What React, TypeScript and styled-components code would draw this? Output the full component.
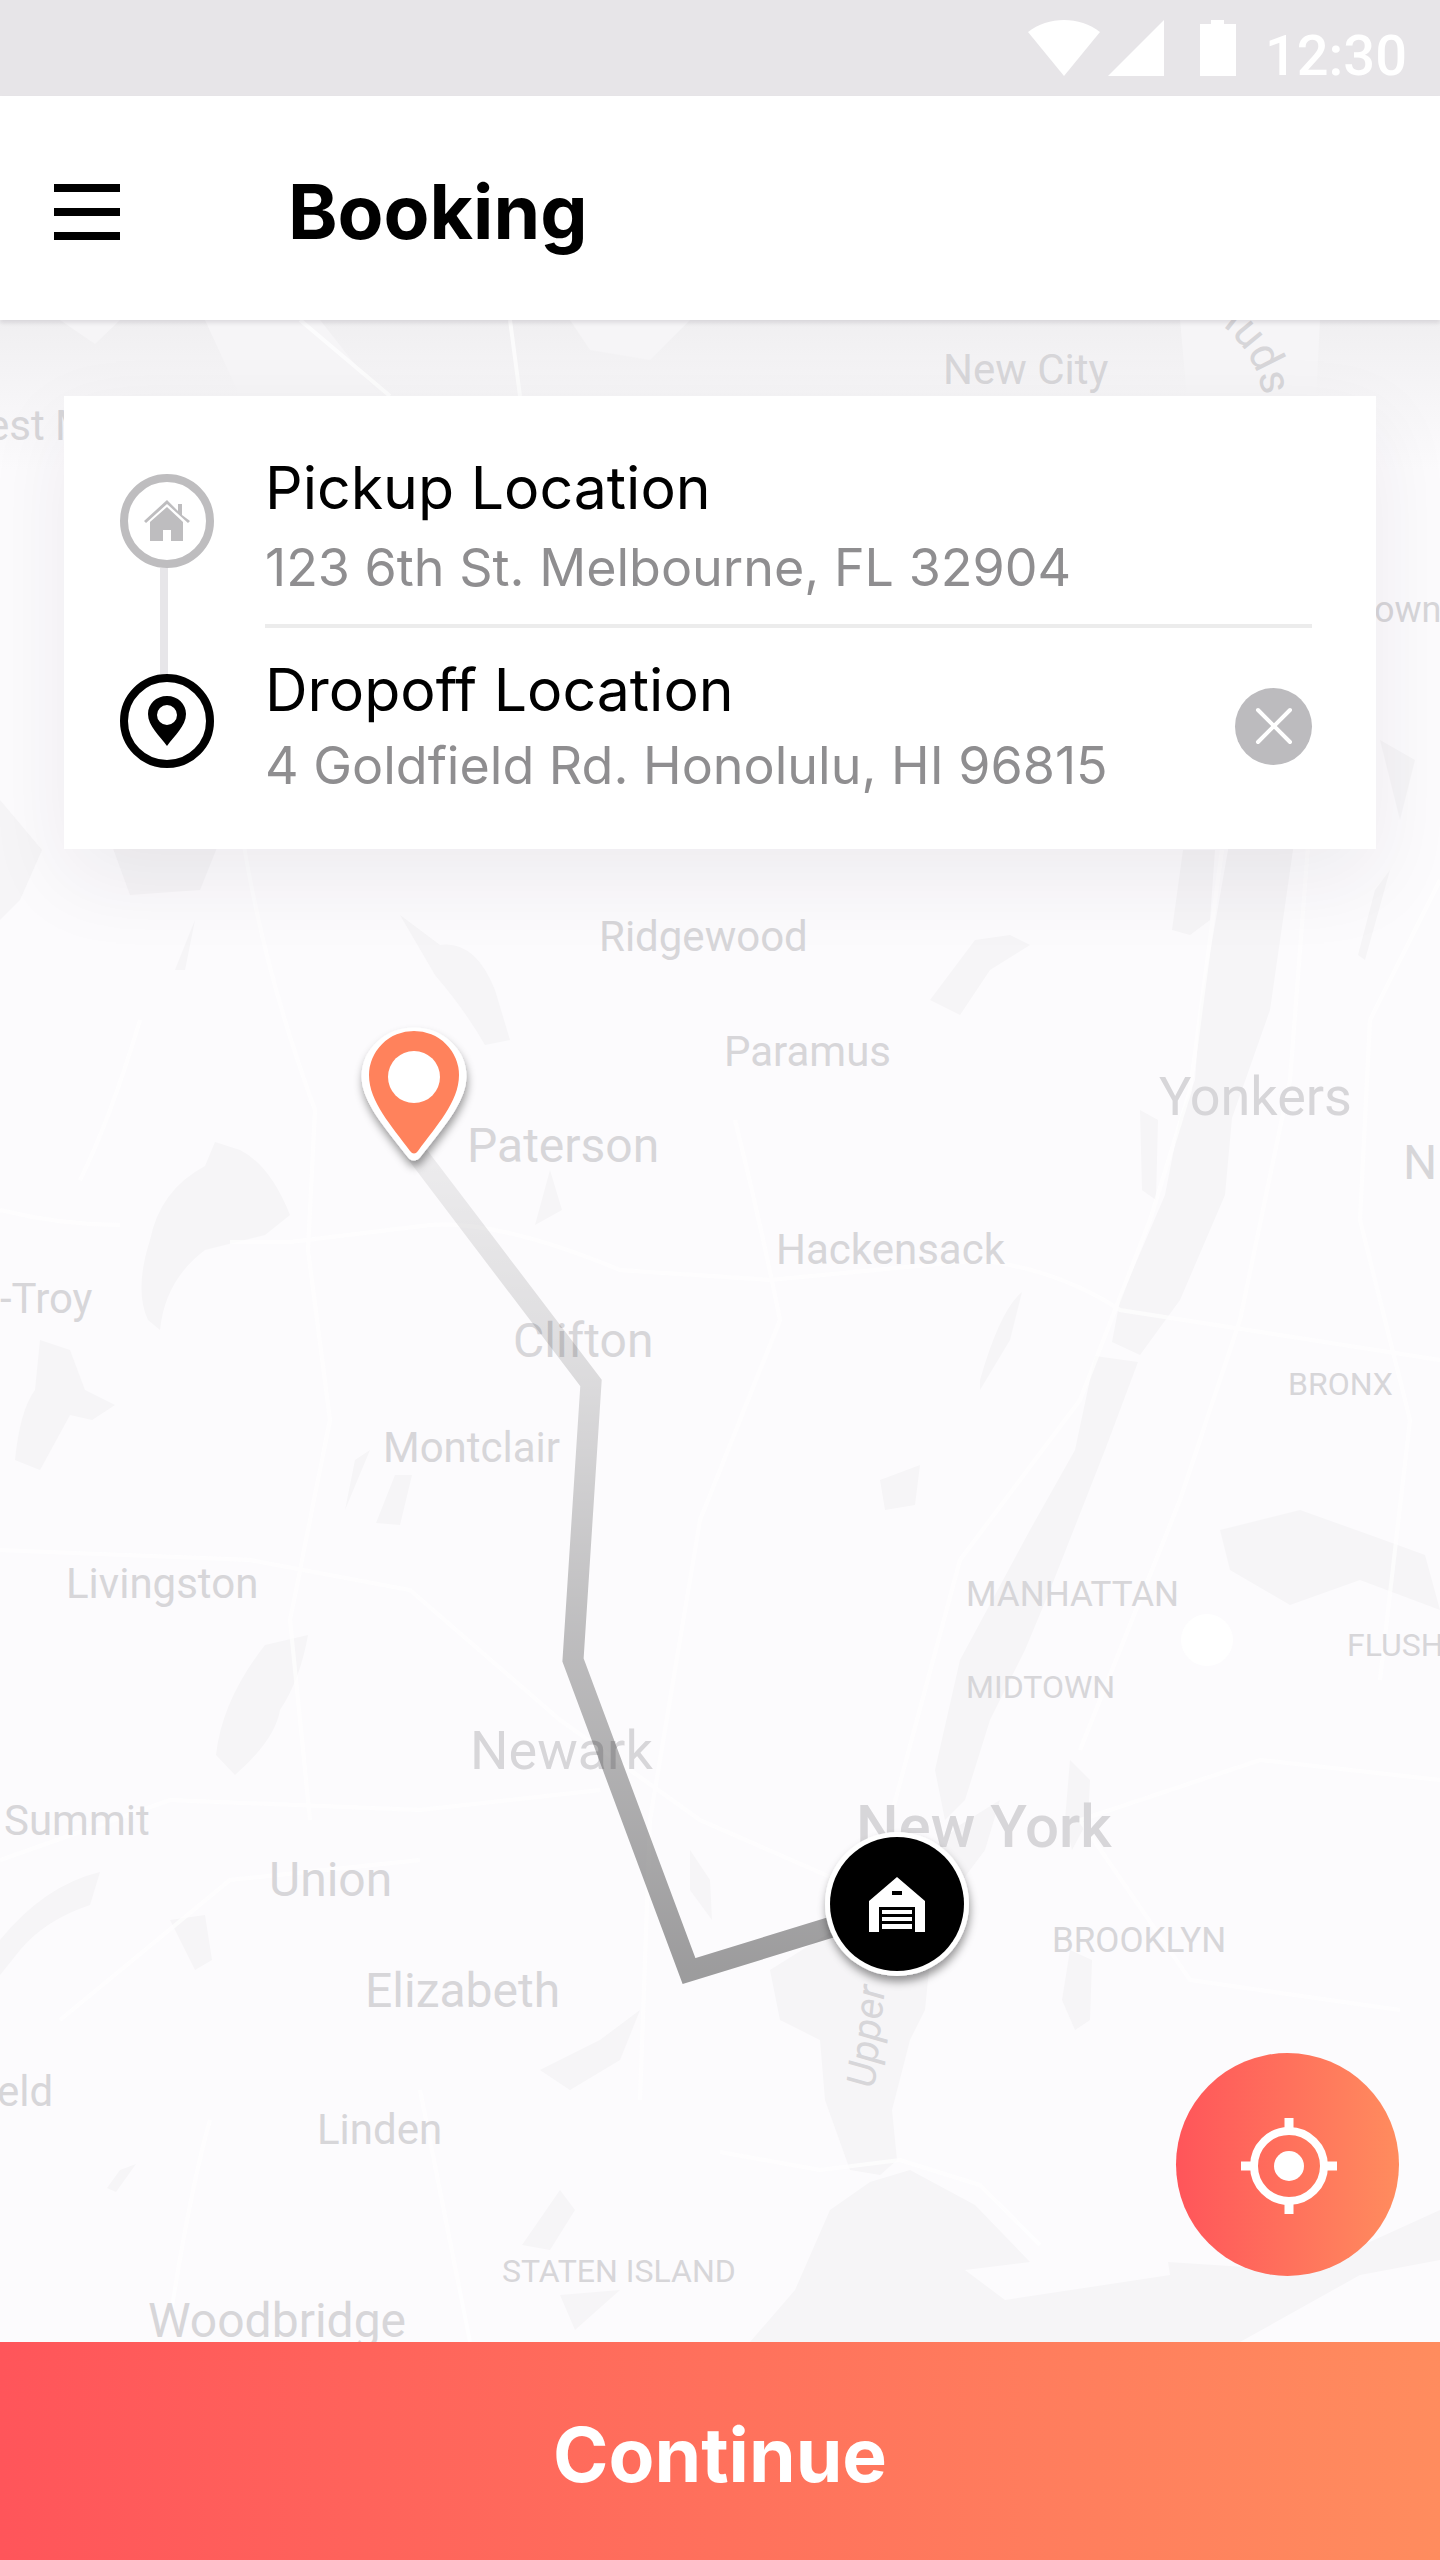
import React from "react";
import styled, { createGlobalStyle } from "styled-components";

const GlobalStyle = createGlobalStyle`
  *, *::before, *::after { box-sizing: border-box; }
  body { margin: 0; background: #fcfbfd; }
  h1, h2, p { margin: 0; }
  button { border: 0; padding: 0; background: none; font: inherit; cursor: pointer; }
  svg { display: block; }
`;

const ACCENT = "linear-gradient(90deg, #ff555a 0%, #ff8c5e 100%)";

const Screen = styled.div`
  display: flex;
  flex-direction: column;
  min-height: 100vh;
  font-family: Inter, "Liberation Sans", sans-serif;
  color: #000;
`;

const StatusBar = styled.div`
  display: flex;
  justify-content: flex-end;
  height: 96px;
  padding: 20px 33px 0 0;
  background: #e7e5e8;
  color: #fff;
`;

const StatusIcons = styled.svg`
  width: 210px;
  height: 56px;
  margin-right: 27px;
`;

const Clock = styled.time`
  font-family: Roboto, sans-serif;
  font-size: 56px;
  font-weight: 500;
  line-height: 72px;
`;

const Header = styled.header`
  position: relative;
  z-index: 2;
  display: flex;
  align-items: center;
  gap: 168px;
  height: 224px;
  padding: 8px 54px 0;
  background: #fff;
  box-shadow: 0 3px 4px rgba(20, 10, 30, 0.1);
`;

const MenuButton = styled.button`
  display: flex;
  flex-direction: column;
  gap: 16px;
  width: 66px;
`;

const MenuLine = styled.span`
  height: 8px;
  background: #000;
`;

const Title = styled.h1`
  font-size: 75px;
  font-weight: 700;
  line-height: 96px;
`;

const MapArea = styled.main`
  position: relative;
  display: flex;
  flex: 1;
  flex-direction: column;
  justify-content: space-between;
  min-height: 2022px;
  padding: 76px 64px 66px;
  overflow: hidden;
`;

const MapCanvas = styled.div`
  position: absolute;
  top: 0;
  left: 50%;
  width: 1440px;
  height: 2022px;
  margin-left: -720px;
`;

const MapDrawing = styled.svg`
  position: absolute;
  inset: 0;
  width: 1440px;
  height: 2022px;
`;

const PlaceLabel = styled.span<{ $x: number; $y: number; $size: number; $weight?: number; $turn?: number }>`
  position: absolute;
  left: ${(p) => p.$x}px;
  top: ${(p) => p.$y - Math.round(p.$size * 0.84)}px;
  font-family: Roboto, sans-serif;
  font-size: ${(p) => p.$size}px;
  font-weight: ${(p) => p.$weight ?? 400};
  font-style: ${(p) => (p.$turn ? "italic" : "normal")};
  line-height: 1;
  white-space: nowrap;
  color: #d7d6d9;
  transform: ${(p) => (p.$turn ? `rotate(${p.$turn}deg)` : "none")};
  transform-origin: 0 84%;
`;

const TripCard = styled.section`
  position: relative;
  display: flex;
  gap: 51px;
  padding: 58px 64px 53px 56px;
  background: #fff;
  box-shadow: 0 30px 80px rgba(40, 30, 50, 0.07);
`;

const Track = styled.div`
  display: flex;
  flex-direction: column;
  align-items: center;
  flex: none;
  width: 94px;
  padding: 20px 0 28px;
`;

const StopBadge = styled.span<{ $color: string }>`
  display: grid;
  place-items: center;
  flex: none;
  width: 94px;
  height: 94px;
  border: 8px solid ${(p) => p.$color};
  border-radius: 50%;
  color: ${(p) => p.$color};
`;

const TrackLine = styled.span`
  flex: 1;
  width: 8px;
  margin-right: 6px;
  background: #e7e6e9;
`;

const Stops = styled.div`
  flex: 1;
  min-width: 0;
`;

const Stop = styled.div`
  display: flex;
  align-items: center;
  justify-content: space-between;

  & + & {
    margin-top: 26px;
    padding-top: 28px;
    border-top: 4px solid #ececec;
  }
`;

const StopText = styled.div<{ $gap: number }>`
  display: flex;
  flex-direction: column;
  gap: ${(p) => p.$gap}px;
`;

const StopName = styled.h2`
  font-size: 59px;
  font-weight: 400;
  line-height: 68px;
`;

const StopAddress = styled.p`
  font-size: 52px;
  line-height: 60px;
  color: #8f8e90;
`;

const ClearButton = styled.button`
  display: grid;
  place-items: center;
  flex: none;
  width: 77px;
  height: 77px;
  border-radius: 50%;
  background: #bcbbbe;
`;

const LocateButton = styled.button`
  position: relative;
  display: grid;
  place-items: center;
  align-self: flex-end;
  width: 223px;
  height: 223px;
  margin-right: -23px;
  padding: 2px 0 0 3px;
  border-radius: 50%;
  background: ${ACCENT};
`;

const ContinueButton = styled.button`
  height: 218px;
  padding-top: 8px;
  background: ${ACCENT};
  color: #fff;
  && {
    font-size: 75px;
    font-weight: 700;
    line-height: 96px;
  }
`;

type Place = { name: string; x: number; y: number; size: number; weight?: number; turn?: number };

const places: Place[] = [
  { name: "New City", x: 943, y: 64, size: 42 },
  { name: "est M", x: -13, y: 120, size: 42 },
  { name: "own", x: 1374, y: 302, size: 36 },
  { name: "Ridgewood", x: 599, y: 631, size: 42 },
  { name: "Paramus", x: 724, y: 746, size: 42 },
  { name: "Yonkers", x: 1159, y: 795, size: 54 },
  { name: "Paterson", x: 467, y: 842, size: 48 },
  { name: "N", x: 1403, y: 859, size: 48 },
  { name: "-Troy", x: 0, y: 993, size: 42 },
  { name: "Clifton", x: 513, y: 1037, size: 48 },
  { name: "Hackensack", x: 776, y: 944, size: 42 },
  { name: "BRONX", x: 1288, y: 1075, size: 32 },
  { name: "Montclair", x: 383, y: 1142, size: 42 },
  { name: "Livingston", x: 66, y: 1278, size: 42 },
  { name: "MANHATTAN", x: 966, y: 1286, size: 35 },
  { name: "FLUSH", x: 1347, y: 1336, size: 32 },
  { name: "MIDTOWN", x: 966, y: 1378, size: 32 },
  { name: "Newark", x: 470, y: 1449, size: 54 },
  { name: "Summit", x: 4, y: 1515, size: 42 },
  { name: "New York", x: 856, y: 1527, size: 60, weight: 500 },
  { name: "Union", x: 269, y: 1576, size: 48 },
  { name: "BROOKLYN", x: 1052, y: 1632, size: 35 },
  { name: "Elizabeth", x: 365, y: 1687, size: 48 },
  { name: "Upper", x: 875, y: 1769, size: 40, turn: -84 },
  { name: "eld", x: -3, y: 1786, size: 42 },
  { name: "Linden", x: 317, y: 1824, size: 42 },
  { name: "STATEN ISLAND", x: 502, y: 1962, size: 32 },
  { name: "Woodbridge", x: 148, y: 2017, size: 48 },
];

const Terrain = () => (
  <MapDrawing viewBox="0 0 1440 2022" aria-hidden="true">
    <defs>
      <linearGradient id="haze" x1="0" y1="0" x2="0" y2="1">
        <stop offset="0" stopColor="#f0eff1" />
        <stop offset="1" stopColor="#f0eff1" stopOpacity="0" />
      </linearGradient>
    </defs>
    <rect width="1440" height="2022" fill="#fcfbfd" />
    <rect width="1440" height="150" fill="url(#haze)" />
    <g fill="#f6f5f7">
      <path d="M1180 0 L1320 0 L1300 400 L1293 530 L1270 690 L1232 798 L1225 875 L1180 980 L1140 1035 L1112 1022 L1120 980 L1165 875 L1180 798 L1195 760 L1200 690 L1228 530 Z" />
      <path d="M1095 1036 L1138 1042 L1105 1130 L1050 1270 L1025 1330 L990 1400 L965 1480 L945 1500 L935 1450 L960 1340 L1030 1210 L1075 1130 Z" />
      <path d="M1183 530 L1215 530 L1210 600 L1190 615 L1172 610Z M1140 790 L1158 800 L1156 880 L1142 870Z" />
      <path d="M1070 1440 L1090 1460 L1088 1500 L1072 1530 L1065 1500Z" />
      <path d="M960 1505 L1000 1480 L985 1530 L955 1570 L930 1640 L925 1690 L910 1720 L892 1790 L897 1840 L880 1855 L850 1850 L825 1780 L820 1720 L780 1700 L770 1650 L850 1600Z" />
      <path d="M750 2022 L795 1970 L830 1890 L870 1862 L910 1850 L975 1885 L1030 1942 L965 1950 L1005 1980 L1170 1955 L1168 1942 L1290 1950 L1330 1940 L1440 1890 L1440 1940 L1360 1955 L1240 2022Z" />
      <path d="M150 920 Q160 870 205 846 L215 822 L240 830 Q270 845 290 895 L265 915 L205 930 Q165 960 160 1010 L148 1000 Q134 970 150 920Z" />
      <path d="M40 1020 L70 1030 L85 1070 L115 1085 L92 1100 L70 1095 L40 1150 L15 1140 Q20 1090 35 1070Z" />
      <path d="M265 1325 L308 1315 Q300 1360 280 1390 Q275 1420 235 1455 L216 1435 Q222 1380 265 1325Z" />
      <path d="M0 1620 Q45 1565 100 1552 L90 1585 Q45 1600 20 1630 L0 1655Z" />
      <path d="M400 595 L440 625 Q475 620 495 670 L510 720 L485 725 Q465 690 435 655Z" />
      <path d="M170 1600 L205 1595 L212 1640 L195 1650 Z M550 850 L562 890 L535 905Z M370 1130 L345 1190 L355 1140Z" />
      <path d="M395 1155 L412 1155 L400 1205 L376 1203Z M980 1060 Q1000 990 1022 972 L1010 1020 L980 1070Z" />
      <path d="M880 1160 L920 1145 L915 1185 L885 1190Z M1220 1210 L1300 1190 L1370 1215 L1425 1235 L1440 1290 L1360 1260 L1290 1285 L1230 1250Z" />
      <path d="M930 680 L975 620 L1010 615 L1030 625 L990 650 L960 695Z M1390 550 L1365 640 L1358 635 L1375 570Z" />
      <path d="M1070 1630 L1092 1640 L1090 1700 L1075 1710 L1062 1680Z" />
      <path d="M540 1750 L600 1720 L640 1690 L620 1740 L570 1770Z M690 1530 L710 1560 L712 1600 L690 1570Z" />
      <path d="M560 1870 L575 1890 L550 1930 L522 1925Z M560 1975 L620 1970 L575 2010Z M120 1850 L136 1844 L116 1872 L107 1868Z" />
      <path d="M60 0 L120 0 L95 24Z M205 0 L320 0 L380 76 L240 76Z M570 0 L690 0 L650 40 L590 30Z M1380 420 L1415 440 L1400 500Z" />
      <path d="M0 480 L42 530 L20 580 L0 600Z M110 520 L220 520 L200 570 L130 575Z M195 600 L185 650 L175 650Z" />
    </g>
    <g fill="none" stroke="#fff" strokeWidth="4" opacity="0.7">
      <path d="M0 890 Q60 905 120 905 M230 922 L290 922 L430 905 Q500 900 620 950 L770 960 L980 940 Q1060 950 1120 990 L1440 1040" />
      <path d="M140 700 Q110 800 80 860 M240 500 Q260 640 315 790 L308 930 L330 1100 L290 1300 L310 1500" />
      <path d="M0 1230 L250 1240 L410 1270 L560 1400 L700 1500 L860 1570 M735 800 Q760 900 780 1000 L700 1200 L650 1500 L640 1780" />
      <path d="M1222 530 L1190 770 L1150 900 L1080 1080 L960 1240 L890 1500 M1310 500 L1290 760 L1240 1000 L1180 1180 L1080 1430" />
      <path d="M0 1540 L170 1480 L420 1490 L600 1470 M60 1700 L230 1560 L420 1540 M1440 1460 L1260 1440 L1080 1500 L1190 1660 L1400 1690" />
      <path d="M720 1832 L820 1850 L900 1840 L980 1865 L1040 1925 M170 2000 Q190 1870 210 1800 M420 1770 L470 2022" />
      <path d="M510 0 L520 76 M300 0 L390 76 M1440 560 L1370 700 L1360 900 L1410 1100 L1380 1360" />
    </g>
    <circle cx="1207" cy="1320" r="26" fill="#fff" />
    <path id="river-name" d="M1206 -6 Q1262 30 1264 90" fill="none" />
    <text fontFamily="Roboto, sans-serif" fontSize="44" fill="#d7d6d9">
      <textPath href="#river-name">Huds</textPath>
    </text>
  </MapDrawing>
);

const Route = () => (
  <MapDrawing viewBox="0 0 1440 2022" aria-hidden="true">
    <defs>
      <linearGradient id="route" gradientUnits="userSpaceOnUse" x1="0" y1="830" x2="0" y2="1651">
        <stop offset="0" stopOpacity="0.06" />
        <stop offset="0.28" stopOpacity="0.13" />
        <stop offset="0.6" stopOpacity="0.25" />
        <stop offset="1" stopOpacity="0.38" />
      </linearGradient>
      <filter id="lift" x="-30%" y="-30%" width="160%" height="170%">
        <feDropShadow dx="1" dy="6" stdDeviation="4" floodOpacity="0.4" />
      </filter>
    </defs>
    <path d="M414 830 L591 1063 L573 1340 L689 1651 L897 1587" fill="none" stroke="url(#route)" strokeWidth="21" />
    <g filter="url(#lift)">
      <path
        d="M414 833 C395 808 369 780 369 757 A45 42 0 0 1 459 757 C459 780 433 808 414 833Z"
        fill="#fff"
        stroke="#fff"
        strokeWidth="15"
        strokeLinejoin="round"
      />
    </g>
    <path d="M410 831 C392 806 369 782 369 755 A45 44 0 0 1 459 755 C459 782 436 806 418 831 Q414 836 410 831Z" fill="#ff825c" />
    <circle cx="414" cy="757" r="26" fill="#fff" />
    <circle cx="897" cy="1584" r="72" fill="#fff" filter="url(#lift)" />
    <circle cx="897" cy="1584" r="67" fill="#000" />
    <path
      d="M897 1557 L925 1581 V1612 H915 V1587 H879 V1612 H869 V1581Z M892 1571 V1575 H902 V1571Z M882 1590 H912 V1594 H882Z M882 1597 H912 V1601 H882Z M882 1604 H912 V1609 H882Z"
      fill="#fff"
      fillRule="evenodd"
    />
  </MapDrawing>
);

const HouseIcon = () => (
  <svg width="46" height="42" viewBox="0 0 46 42" fill="currentColor" aria-hidden="true">
    <path d="M23 0 L34 11 V4 H38 V15 L46 21 L44 23 L23 4 L2 23 L0 21Z" />
    <path d="M23 7 L39 22 V41 H27 V30 H19 V41 H6 V22Z" />
  </svg>
);

const PinIcon = () => (
  <svg width="38" height="50" viewBox="0 0 38 50" fill="currentColor" aria-hidden="true">
    <path
      d="M19 0 C8 0 0 8 0 18 C0 30 12 40 19 50 C26 40 38 30 38 18 C38 8 30 0 19 0Z M19 9 A10 10 0 1 1 19 29 A10 10 0 1 1 19 9Z"
      fillRule="evenodd"
    />
  </svg>
);

export default function App() {
  return (
    <Screen>
      <GlobalStyle />
      <StatusBar>
        <StatusIcons viewBox="0 0 210 56" fill="currentColor" aria-hidden="true">
          <path d="M0 12 C20 -4 52 -4 72 12 L36 56Z" />
          <path d="M136 0 V56 H80Z" />
          <path d="M172 4 H183 V0 H196 V4 H208 V56 H172Z" />
        </StatusIcons>
        <Clock>12:30</Clock>
      </StatusBar>
      <Header>
        <MenuButton aria-label="Menu">
          <MenuLine />
          <MenuLine />
          <MenuLine />
        </MenuButton>
        <Title>Booking</Title>
      </Header>
      <MapArea>
        <MapCanvas>
          <Terrain />
          {places.map((p) => (
            <PlaceLabel key={p.name} $x={p.x} $y={p.y} $size={p.size} $weight={p.weight} $turn={p.turn}>
              {p.name}
            </PlaceLabel>
          ))}
          <Route />
        </MapCanvas>
        <TripCard>
          <Track>
            <StopBadge $color="#bebdbf">
              <HouseIcon />
            </StopBadge>
            <TrackLine />
            <StopBadge $color="#000">
              <PinIcon />
            </StopBadge>
          </Track>
          <Stops>
            <Stop>
              <StopText $gap={16}>
                <StopName>Pickup Location</StopName>
                <StopAddress>123 6th St. Melbourne, FL 32904</StopAddress>
              </StopText>
            </Stop>
            <Stop>
              <StopText $gap={12}>
                <StopName>Dropoff Location</StopName>
                <StopAddress>4 Goldfield Rd. Honolulu, HI 96815</StopAddress>
              </StopText>
              <ClearButton aria-label="Clear dropoff location">
                <svg width="38" height="38" viewBox="0 0 38 38" stroke="#fff" strokeWidth="4" strokeLinecap="round">
                  <path d="M3 3 L35 35 M35 3 L3 35" />
                </svg>
              </ClearButton>
            </Stop>
          </Stops>
        </TripCard>
        <LocateButton aria-label="Show my location">
          <svg width="96" height="96" viewBox="0 0 96 96" fill="none" stroke="#fff" strokeWidth="9">
            <circle cx="48" cy="48" r="35" strokeWidth="8" />
            <path d="M48 0 V12 M48 84 V96 M0 48 H12 M84 48 H96" />
            <circle cx="48" cy="48" r="15" fill="#fff" stroke="none" />
          </svg>
        </LocateButton>
      </MapArea>
      <ContinueButton>Continue</ContinueButton>
    </Screen>
  );
}
